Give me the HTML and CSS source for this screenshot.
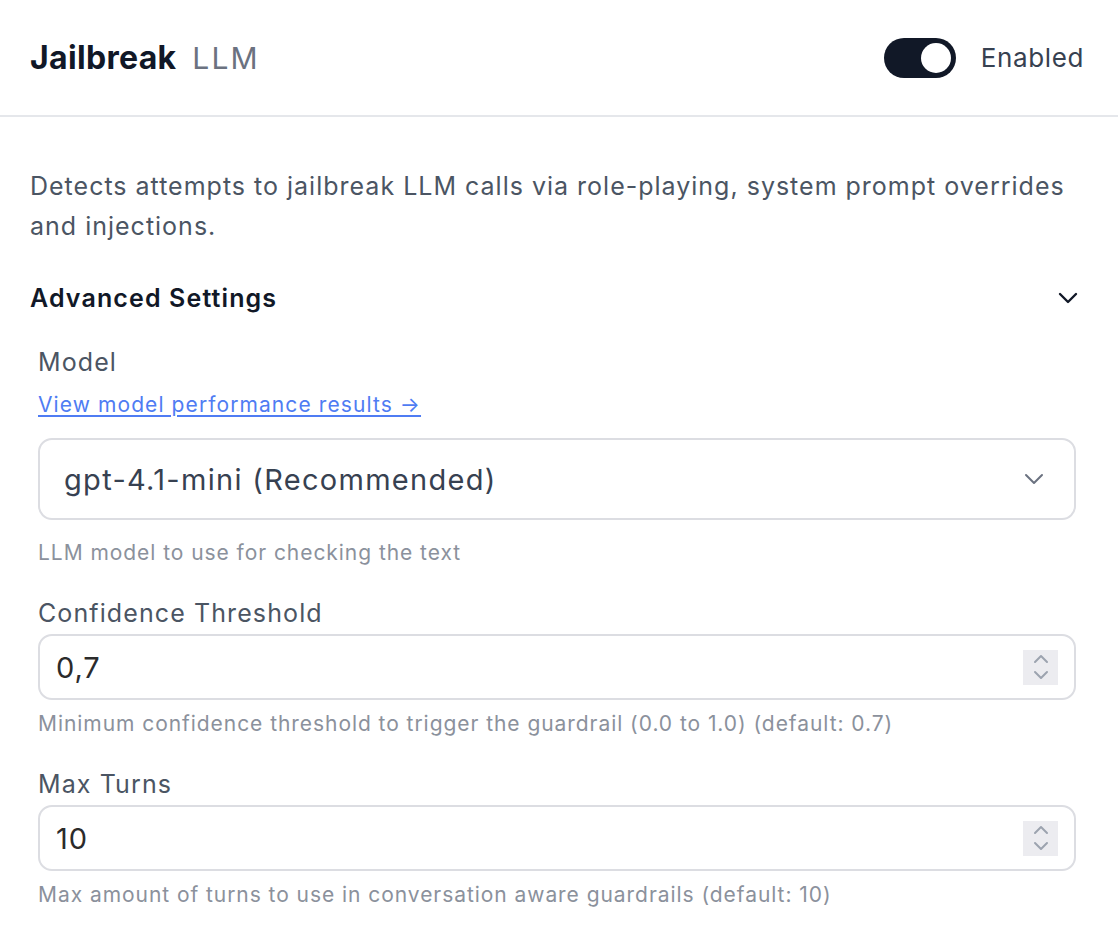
FILE: index.html
```html
<!DOCTYPE html>
<html lang="en">
<head>
    <meta charset="UTF-8">
    <meta name="viewport" content="width=device-width, initial-scale=1.0">
    <title>Jailbreak LLM</title>
    <link rel="stylesheet" href="styles.css">
</head>
<body>
    <div class="panel">
        <!-- Cabecera con nombre y toggle -->
        <header class="panel-header">
            <h1 class="title">Jailbreak <span class="title-tag">LLM</span></h1>
            <label class="switch-row">
                <span class="switch on"><span class="knob"></span></span>
                <span class="switch-label">Enabled</span>
            </label>
        </header>

        <div class="panel-body">
            <p class="description">
                Detects attempts to jailbreak LLM calls via role-playing, system prompt overrides and injections.
            </p>

            <div class="section-head">
                <h2>Advanced Settings</h2>
                <svg class="chevron" width="20" height="12" viewBox="0 0 20 12" fill="none">
                    <path d="M2 2l8 8 8-8" stroke="#111827" stroke-width="2.4" stroke-linecap="round" stroke-linejoin="round"/>
                </svg>
            </div>

            <div class="field">
                <div class="label">Model</div>
                <a class="link" href="#">View model performance results →</a>
                <div class="select">
                    <span>gpt-4.1-mini (Recommended)</span>
                    <svg width="20" height="12" viewBox="0 0 20 12" fill="none">
                        <path d="M2 2l8 8 8-8" stroke="#6b7280" stroke-width="2" stroke-linecap="round" stroke-linejoin="round"/>
                    </svg>
                </div>
                <div class="help first">LLM model to use for checking the text</div>
            </div>

            <div class="field">
                <div class="label">Confidence Threshold</div>
                <div class="number">
                    <input type="text" value="0,7">
                    <span class="spinner">
                        <svg width="16" height="28" viewBox="0 0 16 28" fill="none">
                            <path d="M2 9l6-6 6 6M2 19l6 6 6-6" stroke="#9ca3af" stroke-width="2" stroke-linecap="round" stroke-linejoin="round"/>
                        </svg>
                    </span>
                </div>
                <div class="help">Minimum confidence threshold to trigger the guardrail (0.0 to 1.0) (default: 0.7)</div>
            </div>

            <div class="field">
                <div class="label">Max Turns</div>
                <div class="number">
                    <input type="text" value="10">
                    <span class="spinner">
                        <svg width="16" height="28" viewBox="0 0 16 28" fill="none">
                            <path d="M2 9l6-6 6 6M2 19l6 6 6-6" stroke="#9ca3af" stroke-width="2" stroke-linecap="round" stroke-linejoin="round"/>
                        </svg>
                    </span>
                </div>
                <div class="help">Max amount of turns to use in conversation aware guardrails (default: 10)</div>
            </div>
        </div>
    </div>
</body>
</html>
```

FILE: styles.css
```css
* {
    margin: 0;
    padding: 0;
    box-sizing: border-box;
}

body {
    background: #fff;
    font-family: Inter, "Noto Sans", sans-serif;
    color: #111827;
    letter-spacing: 0.04em;
}

.panel-header {
    height: 117px;
    display: flex;
    align-items: center;
    justify-content: space-between;
    padding: 0 34px 0 30px;
    border-bottom: 2px solid #e5e7eb;
}

.title {
    font-size: 32px;
    font-weight: 700;
    color: #111827;
    letter-spacing: 0.01em;
}

.title-tag {
    font-weight: 400;
    color: #6b7280;
    margin-left: 8px;
    font-size: 30px;
    letter-spacing: 0.07em;
}

.switch-row {
    display: flex;
    align-items: center;
    gap: 25px;
}

.switch {
    width: 72px;
    height: 40px;
    border-radius: 20px;
    background: #111827;
    display: flex;
    align-items: center;
    padding: 0 5px;
}

.switch.on {
    justify-content: flex-end;
}

.knob {
    width: 30px;
    height: 30px;
    border-radius: 50%;
    background: #fff;
}

.switch-label {
    font-size: 26px;
    color: #374151;
}

.panel-body {
    padding: 49px 40px 0 30px;
}

.description {
    font-size: 25px;
    line-height: 40px;
    color: #4b5563;
    letter-spacing: 0.04em;
}

.section-head {
    display: flex;
    align-items: center;
    justify-content: space-between;
    margin-top: 34px;
    height: 36px;
}

.section-head h2 {
    font-size: 25px;
    font-weight: 600;
    color: #111827;
    letter-spacing: 0.045em;
}

.field {
    padding: 0 2px 0 8px;
}

.label {
    font-size: 25px;
    line-height: 36px;
    color: #4b5563;
    margin-top: 28px;
    letter-spacing: 0.044em;
}

.field + .field .label {
    margin-top: 27px;
}

.link {
    display: block;
    font-size: 21px;
    line-height: 30px;
    color: #4f7cf3;
    margin-top: 10px;
    text-decoration: underline;
    text-underline-offset: 3px;
    width: max-content;
    letter-spacing: 0.052em;
}

.select {
    margin-top: 18px;
    height: 82px;
    border: 2px solid #dcdde2;
    border-radius: 14px;
    display: flex;
    align-items: center;
    justify-content: space-between;
    padding: 0 30px 0 24px;
    font-size: 29px;
    color: #374151;
    letter-spacing: 0.045em;
}

.number {
    margin-top: 3px;
    height: 66px;
    border: 2px solid #dcdde2;
    border-radius: 14px;
    display: flex;
    align-items: center;
    padding: 0 16px 0 16px;
}

.number input {
    flex: 1;
    border: none;
    outline: none;
    font-family: inherit;
    font-size: 29px;
    letter-spacing: 0.03em;
    color: #2b2b2b;
    background: transparent;
}

.spinner {
    width: 35px;
    height: 35px;
    background: #ececf0;
    display: flex;
    align-items: center;
    justify-content: center;
}

.help {
    font-size: 21px;
    line-height: 30px;
    color: #8b919c;
    margin-top: 9px;
    letter-spacing: 0.045em;
}

.help.first {
    margin-top: 18px;
}
```
